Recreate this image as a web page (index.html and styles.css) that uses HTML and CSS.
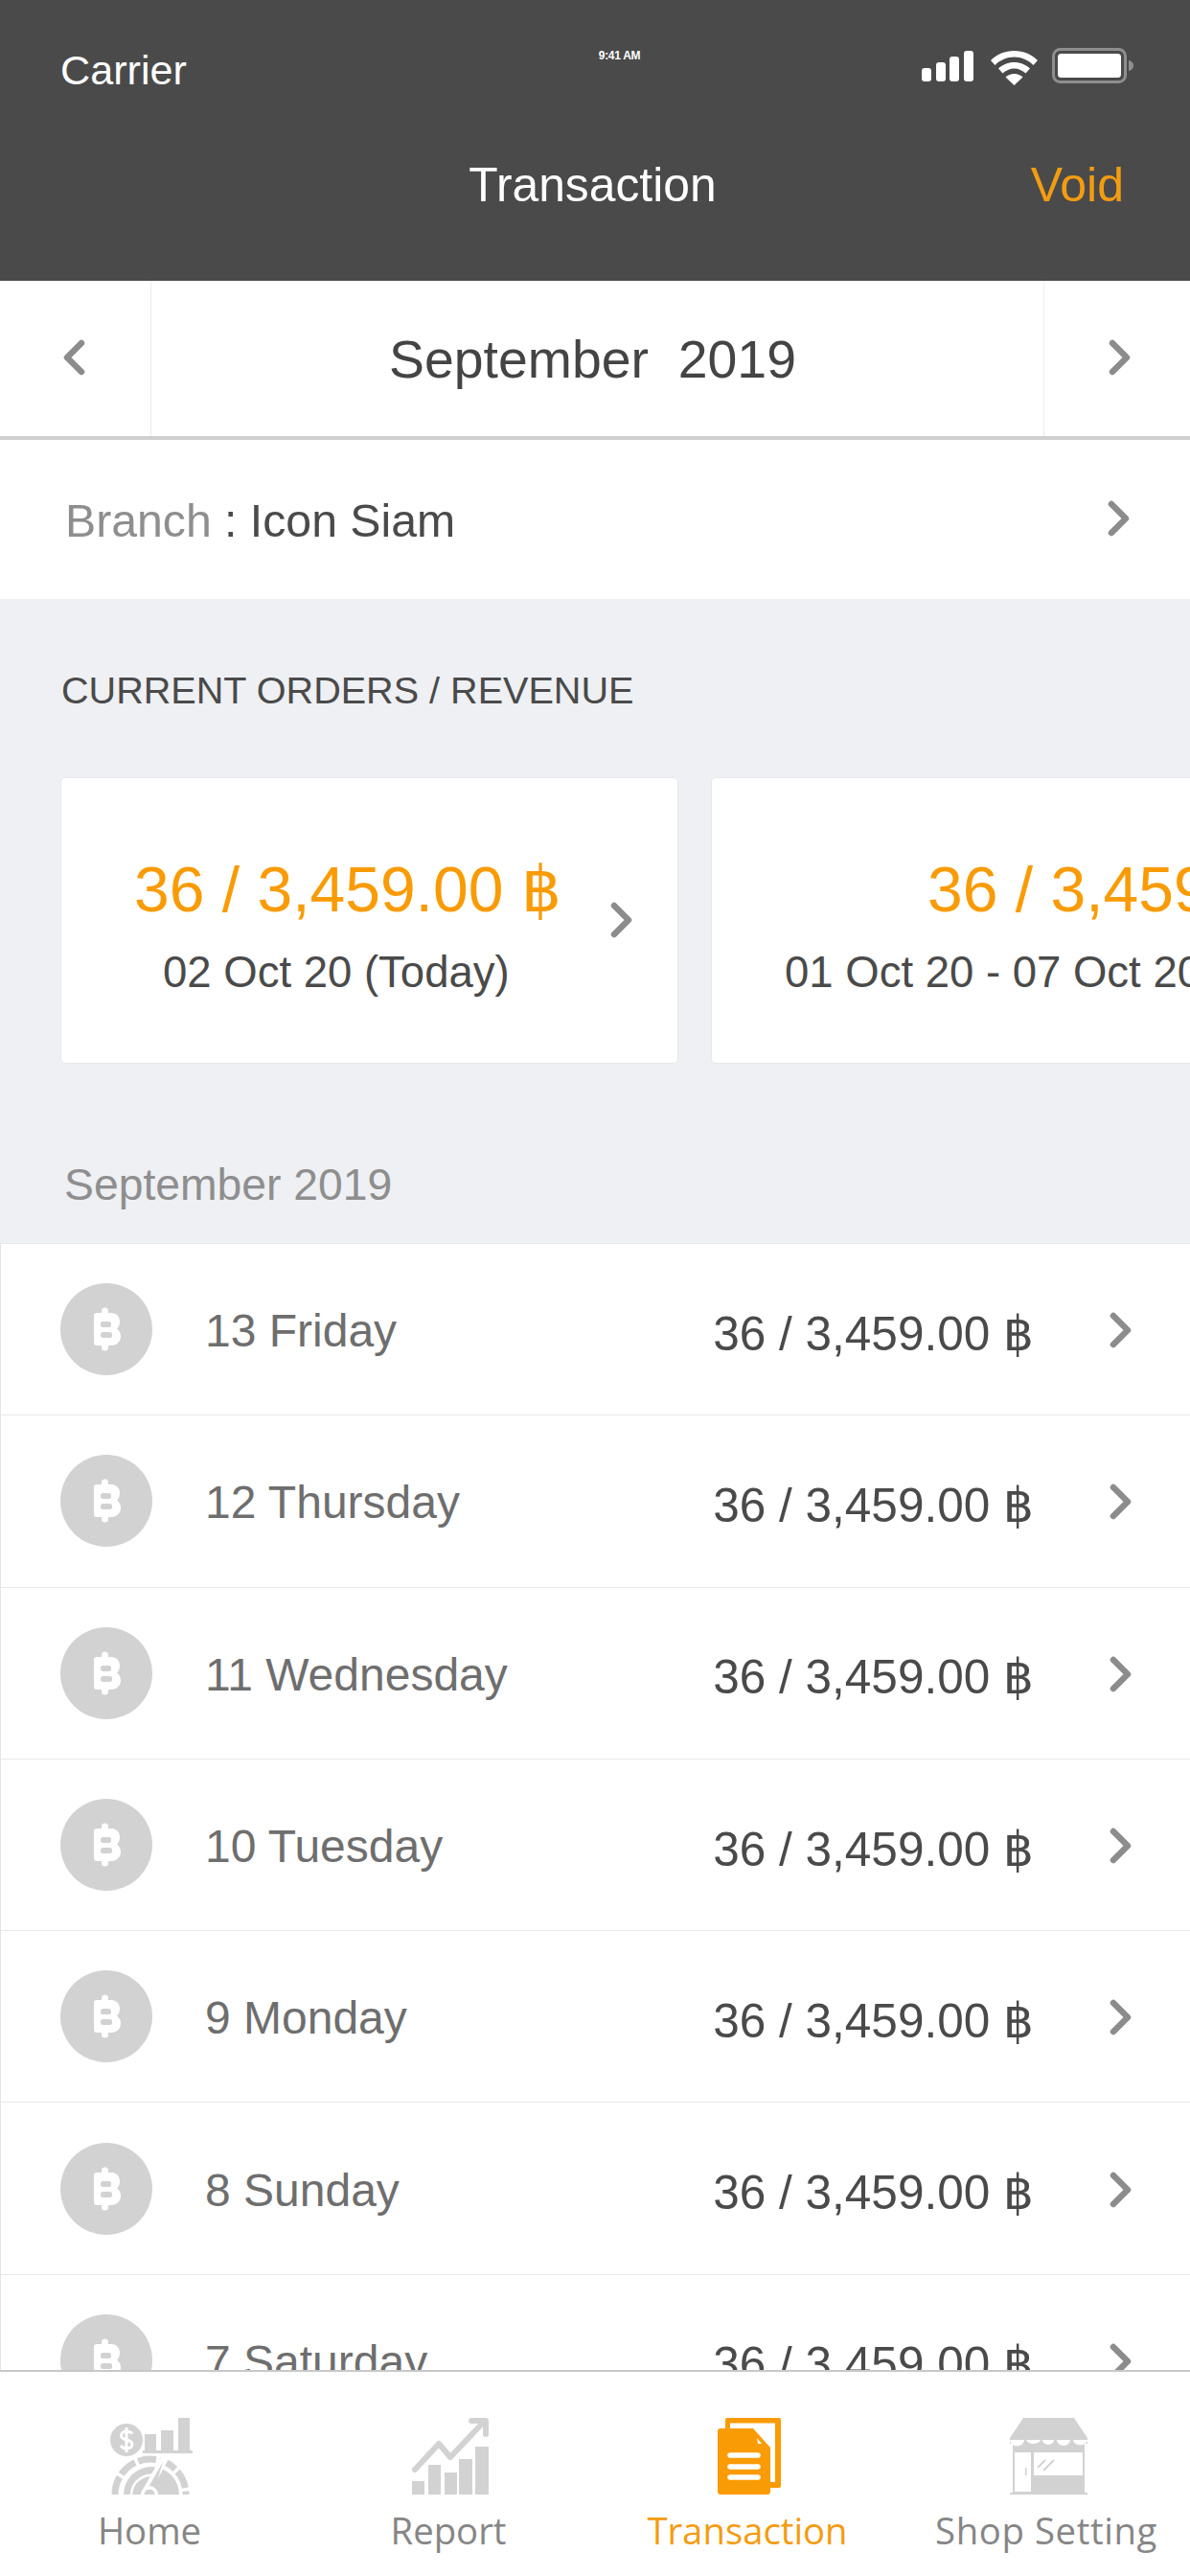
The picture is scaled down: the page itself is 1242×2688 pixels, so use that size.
FILE: index.html
```html
<!DOCTYPE html>
<html lang="en">
<head>
<meta charset="utf-8">
<title>Transaction</title>
<link rel="stylesheet" href="styles.css">
</head>
<body>
<div class="screen">
  <svg width="0" height="0" class="defs">
    <symbol id="chev" viewBox="0 0 24 38"><path d="M4 4 L19 19 L4 34" fill="none" stroke="currentColor" stroke-width="6.5" stroke-linecap="round" stroke-linejoin="round"/></symbol>
    <symbol id="baht" viewBox="0 0 96 96">
      <circle cx="48" cy="48" r="48" fill="#d2d2d2"/>
      <path fill="#fff" d="M43 31v-2a3.5 3.5 0 0 1 7 0v2h3c6 0 9 4.500 9 9 0 3-1 5.500-3 7.500 3 2 4 5 4 8 0 5-4 9.500-10 9.500h-3v2a3.500 3.500 0 0 1-7 0v-2h-5a3 3 0 0 1-3-3V34a3 3 0 0 1 3-3z"/>
      <rect x="42" y="40" width="11" height="6" rx="2.500" fill="#d2d2d2"/>
      <rect x="42" y="51" width="12" height="6" rx="2.500" fill="#d2d2d2"/>
    </symbol>
  </svg>
  <header class="topbar">
    <div class="status">
      <span class="carrier">Carrier</span>
      <span class="clock">9:41 AM</span>
      <span class="status-icons">
        <svg class="signal" width="54" height="32" viewBox="0 0 54 32"><g fill="#fff"><rect x="0" y="18" width="10" height="14" rx="3"/><rect x="15" y="12" width="10" height="20" rx="3"/><rect x="29" y="6" width="10" height="26" rx="3"/><rect x="44" y="0" width="10" height="32" rx="3"/></g></svg>
        <svg class="wifi" width="49" height="36" viewBox="0 0 49 36"><path fill="#fff" d="M24.500 0C34 0 42.500 3.500 49 10l-4.500 5C39 9.500 32 6.500 24.500 6.500S10 9.500 4.500 15L0 10C6.500 3.500 15 0 24.500 0z"/><path fill="#fff" d="M24.500 12c6.500 0 12 2.500 16.500 6.500L36.500 23.500c-3.200-3-7.500-5-12-5s-8.800 2-12 5L8 18.500C12.500 14.500 18 12 24.500 12z"/><path fill="#fff" d="M24.500 24c3.500 0 6.500 1.300 9 3.500L24.500 36l-9-8.500c2.500-2.200 5.500-3.500 9-3.500z"/></svg>
        <svg class="battery" width="85" height="37" viewBox="0 0 85 37"><rect x="1.500" y="1.500" width="75" height="34" rx="7" fill="none" stroke="#8e8e8e" stroke-width="3"/><rect x="6" y="6" width="66" height="25" rx="3.500" fill="#fff"/><path d="M80 13c3 .5 5 2.500 5 5.500s-2 5-5 5.500z" fill="#8e8e8e"/></svg>
      </span>
    </div>
    <div class="navbar">
      <span class="nav-title">Transaction</span>
      <span class="nav-action">Void</span>
    </div>
  </header>

  <section class="month">
    <div class="month-btn"><svg class="chev flip"><use href="#chev"/></svg></div>
    <div class="month-title">September&nbsp; 2019</div>
    <div class="month-btn next"><svg class="chev"><use href="#chev"/></svg></div>
  </section>

  <section class="branch">
    <span class="branch-text"><span class="branch-label">Branch</span> : Icon Siam</span>
    <svg class="chev"><use href="#chev"/></svg>
  </section>

  <main class="content">
    <h2 class="section-title">CURRENT ORDERS / REVENUE</h2>
    <div class="cards">
      <article class="card card-today">
        <div class="card-amount">36 / 3,459.00 ฿</div>
        <div class="card-date">02 Oct 20 (Today)</div>
        <svg class="chev card-chev"><use href="#chev"/></svg>
      </article>
      <article class="card card-week">
        <div class="card-amount">36 / 3,459.00 ฿</div>
        <div class="card-date">01 Oct 20 - 07 Oct 20</div>
      </article>
    </div>
    <h3 class="list-title">September 2019</h3>
    <ul class="days">
      <li class="day"><svg class="coin"><use href="#baht"/></svg><span class="day-name">13 Friday</span><span class="day-amount">36 / 3,459.00 ฿</span><svg class="chev"><use href="#chev"/></svg></li>
      <li class="day"><svg class="coin"><use href="#baht"/></svg><span class="day-name">12 Thursday</span><span class="day-amount">36 / 3,459.00 ฿</span><svg class="chev"><use href="#chev"/></svg></li>
      <li class="day"><svg class="coin"><use href="#baht"/></svg><span class="day-name">11 Wednesday</span><span class="day-amount">36 / 3,459.00 ฿</span><svg class="chev"><use href="#chev"/></svg></li>
      <li class="day"><svg class="coin"><use href="#baht"/></svg><span class="day-name">10 Tuesday</span><span class="day-amount">36 / 3,459.00 ฿</span><svg class="chev"><use href="#chev"/></svg></li>
      <li class="day"><svg class="coin"><use href="#baht"/></svg><span class="day-name">9 Monday</span><span class="day-amount">36 / 3,459.00 ฿</span><svg class="chev"><use href="#chev"/></svg></li>
      <li class="day"><svg class="coin"><use href="#baht"/></svg><span class="day-name">8 Sunday</span><span class="day-amount">36 / 3,459.00 ฿</span><svg class="chev"><use href="#chev"/></svg></li>
      <li class="day"><svg class="coin"><use href="#baht"/></svg><span class="day-name">7 Saturday</span><span class="day-amount">36 / 3,459.00 ฿</span><svg class="chev"><use href="#chev"/></svg></li>
    </ul>
  </main>

  <nav class="tabs">
    <div class="tab">
      <svg class="tab-icon" width="86" height="80" viewBox="0 0 86 80">
        <g fill="#d2d2d2">
          <circle cx="17" cy="23" r="17"/>
          <rect x="36" y="17" width="12" height="18"/><rect x="53" y="13" width="13" height="22"/><rect x="71" y="0" width="12" height="35"/><rect x="34" y="34" width="52" height="3"/>
          <path d="M14 80a29 29 0 0 1 58 0z"/>
        </g>
        <path d="M23 16.500c-1.500-2-3.500-2.500-6-2.500-3 0-5.500 1.500-5.500 4.500 0 6 11.500 3 11.500 9 0 3-2.500 4.500-5.500 4.500-2.500 0-5-1-6.500-3M17 10v26" fill="none" stroke="#fff" stroke-width="3"/>
        <path d="M5 80a37 37 0 0 1 74 0" fill="none" stroke="#d2d2d2" stroke-width="7" stroke-dasharray="19 3.500"/>
        <path d="M22 80a21 21 0 0 1 28-19" fill="none" stroke="#fff" stroke-width="2.500"/>
        <path d="M38 76 L57 42" fill="none" stroke="#fff" stroke-width="8"/>
        <path d="M39 74 L55 46 L46 76z" fill="#d2d2d2"/>
        <circle cx="41" cy="80" r="9" fill="#fff"/><circle cx="41" cy="80" r="5.500" fill="#d2d2d2"/>
      </svg>
      <span class="tab-label">Home</span>
    </div>
    <div class="tab">
      <svg class="tab-icon" width="80" height="80" viewBox="0 0 80 80">
        <g fill="#d2d2d2"><rect x="0" y="66" width="13" height="14"/><rect x="17" y="49" width="13" height="31"/><rect x="34" y="57" width="13" height="23"/><rect x="49" y="43" width="14" height="37"/><rect x="66" y="30" width="14" height="50"/></g>
        <path d="M3 54 L28 27 L40 41 L75 4" fill="none" stroke="#d2d2d2" stroke-width="6" stroke-linecap="round" stroke-linejoin="round"/>
        <path d="M62 3 L77 3 L77 17" fill="none" stroke="#d2d2d2" stroke-width="6" stroke-linecap="round" stroke-linejoin="round"/>
      </svg>
      <span class="tab-label">Report</span>
    </div>
    <div class="tab tab-active">
      <svg class="tab-icon" width="66" height="80" viewBox="0 0 66 80">
        <path fill="#f99b05" fill-rule="evenodd" d="M10 0h54a2 2 0 0 1 2 2v69a2 2 0 0 1-2 2H55V67h5V5.500H13V11H8V2a2 2 0 0 1 2-2z"/>
        <path fill="#f99b05" d="M3 11h34L55 31v46a3 3 0 0 1-3 3H3a3 3 0 0 1-3-3V14a3 3 0 0 1 3-3z"/>
        <path fill="#fff" d="M41 21l5 6h-4z"/>
        <g stroke="#fff" stroke-width="5.500" stroke-linecap="round"><path d="M13 39h29"/><path d="M13 51h29"/><path d="M13 62h29"/></g>
      </svg>
      <span class="tab-label">Transaction</span>
    </div>
    <div class="tab">
      <svg class="tab-icon" width="81" height="80" viewBox="0 0 81 80">
        <path fill="#d2d2d2" d="M14 0h53l14 21v6H0v-6z"/>
        <rect x="3" y="24" width="75" height="54" fill="#d2d2d2"/>
        <g fill="#fff"><path d="M0 23a7 6 0 0 0 15 0z"/><path d="M17 23a8 6 0 0 0 15 0z"/><path d="M34 23a6 5 0 0 0 12 0z"/><path d="M49 23a7 6 0 0 0 14 0z"/><path d="M66 23a7 5 0 0 0 15 0z"/></g>
        <rect x="5" y="36" width="17" height="41" fill="#fff"/>
        <rect x="25" y="36" width="51" height="24" fill="#fff"/>
        <rect x="16" y="52" width="1.500" height="8" fill="#d2d2d2"/>
        <path d="M29 52l8-8M35 55l11-11" stroke="#d2d2d2" stroke-width="1.800"/>
        <rect x="0" y="78" width="81" height="2" fill="#d2d2d2"/>
      </svg>
      <span class="tab-label tab-label-wide">Shop Setting</span>
    </div>
  </nav>
</div>
</body>
</html>
```
FILE: styles.css
```css
* { box-sizing: border-box; }
html, body { margin: 0; padding: 0; }
body { width: 1242px; height: 2688px; overflow: hidden; font-family: "Liberation Sans", Arial, sans-serif; background: #eef0f3; }
.screen { width: 1242px; height: 2688px; display: flex; flex-direction: column; overflow: hidden; }
.defs { display: block; height: 0; }
.chev { width: 24px; height: 38px; color: #8c8c8c; flex: none; display: block; }
.flip { transform: scaleX(-1); }

.topbar { height: 293px; flex: none; background: #4a4a4a; color: #fff; display: flex; flex-direction: column; }
.status { height: 130px; padding: 52px 59px 0 63px; display: grid; grid-template-columns: 1fr auto 1fr; align-items: start; }
.carrier { font-size: 43.2px; line-height: 42px; }
.clock { font-size: 12px; line-height: 12px; font-weight: 700; margin-left: 47px; letter-spacing: -0.3px; }
.status-icons { display: flex; justify-content: flex-end; align-items: flex-start; gap: 18px; margin-top: 1px; }
.wifi { margin-right: -3px; }
.battery { margin-top: -3px; }
.navbar { display: flex; position: relative; justify-content: center; padding: 33px 5px 0 0; }
.nav-title { font-size: 49.8px; line-height: 60px; }
.nav-action { position: absolute; right: 69px; top: 33px; font-size: 50px; line-height: 60px; color: #f39c12; }

.month { height: 166px; flex: none; background: #fff; border-bottom: 4px solid #cfcfcf; display: grid; grid-template-columns: 158px 1fr 153px; }
.month-btn { display: flex; align-items: center; padding: 0 0 2px 65px; border-right: 1px solid #ececec; }
.month-btn.next { border-right: 0; border-left: 1px solid #ececec; padding-left: 67px; }
.month-title { display: flex; align-items: center; justify-content: center; font-size: 55.4px; color: #444; padding: 2px 10px 0 0; }

.branch { height: 166px; flex: none; background: #fff; display: flex; align-items: center; justify-content: space-between; padding: 0 62px 2px 68px; }
.branch-text { font-size: 48.2px; color: #4a4a4a; padding-top: 4px; }
.branch-label { color: #8e8e8e; }

.content { flex: 1; min-height: 0; overflow: hidden; }
.section-title { margin: 72px 0 0 64px; font-size: 39.6px; line-height: 46px; font-weight: 400; color: #4a4a4a; }
.cards { display: flex; gap: 34px; margin: 68px 0 0 63px; width: 1179px; overflow: hidden; }
.card { position: relative; width: 645px; height: 299px; flex: none; background: #fff; border: 1px solid #e6e8ea; border-radius: 5px; padding-top: 78px; white-space: nowrap; }
.card-amount { font-size: 66px; line-height: 76px; color: #f99b05; }
.card-date { font-size: 45.5px; line-height: 54px; color: #4a4a4a; margin-top: 22px; }
.card-today .card-amount { padding-left: 76px; }
.card-today .card-date { padding-left: 106px; }
.card-week .card-amount { padding-left: 225px; }
.card-week .card-date { padding-left: 76px; }
.card-chev { position: absolute; left: 573px; top: 129px; }

.list-title { margin: 100px 0 0 67px; font-size: 46.3px; line-height: 52px; font-weight: 400; color: #8e8e8e; }
.days { list-style: none; margin: 35px 0 0; padding: 0; background: #fff; border-left: 1px solid #e4e4e4; }
.day { height: 179.3px; display: flex; align-items: center; padding: 0 60px 0 62px; border-top: 1px solid #e9e9e9; }
.day > .chev { margin-top: 2px; }
.coin { width: 96px; height: 96px; flex: none; }
.day-name { margin-left: 55px; flex: 1; font-size: 48px; color: #6e6e6e; padding-top: 3px; }
.day-amount { font-size: 49.5px; color: #4a4a4a; margin-right: 79px; padding-top: 9px; }

.tabs { height: 215px; flex: none; background: #fff; border-top: 2px solid #c8c8c8; display: grid; grid-template-columns: repeat(4, 312px); }
.tab { display: flex; flex-direction: column; align-items: center; padding-top: 48px; }
.tab-icon { display: block; flex: none; transform: translateX(2px); }
.tab-label { font-family: "Open Sans", sans-serif; font-size: 38.3px; line-height: 52px; margin-top: 11px; color: #868686; }
.tab-label-wide { letter-spacing: 0.6px; }
.tab-active .tab-label { color: #f39c12; }
```
